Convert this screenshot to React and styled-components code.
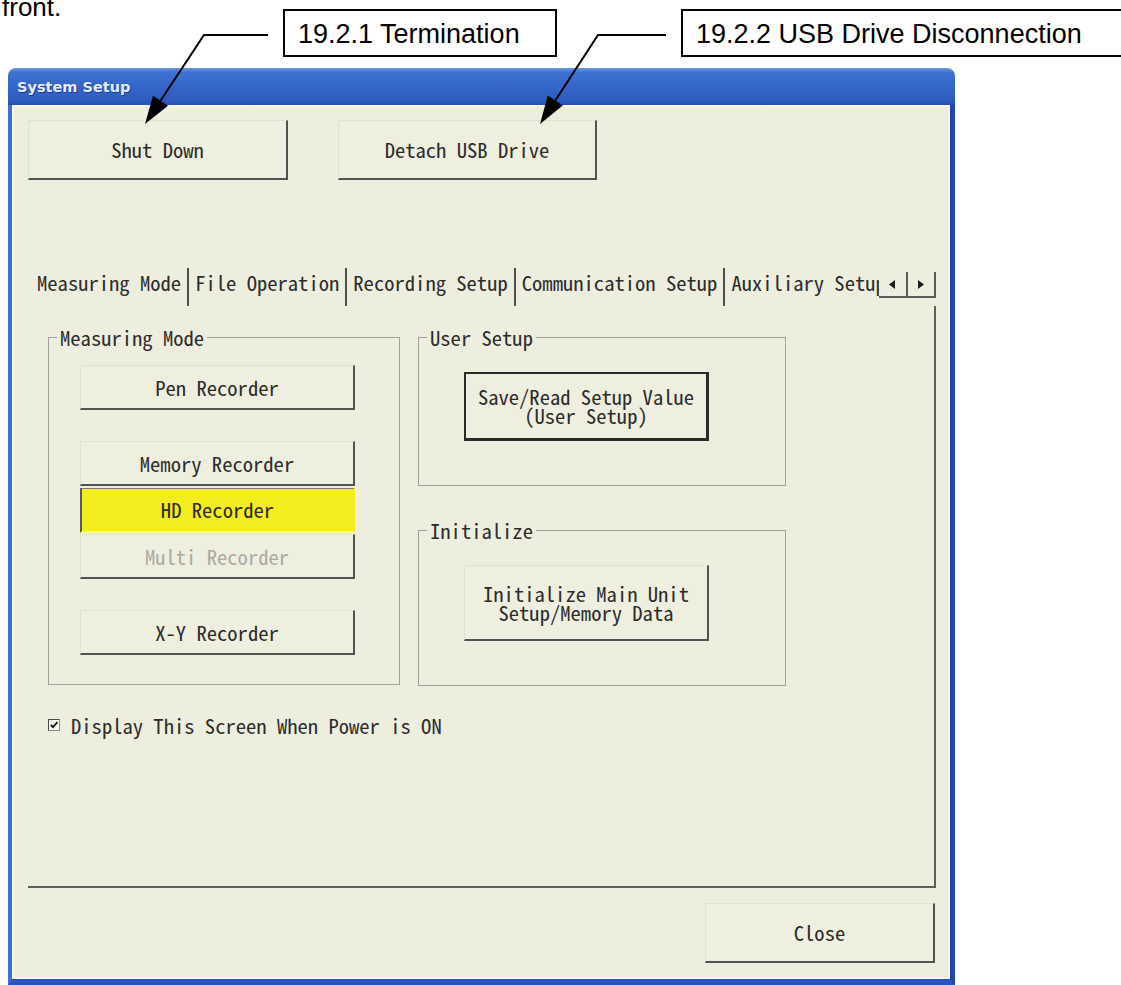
import React from "react";
import styled, { createGlobalStyle } from "styled-components";

const UI_FONT = `"Noto Sans Mono CJK JP", "Noto Sans Mono CJK SC", "DejaVu Sans Mono", monospace`;
const CREAM = "#eeeede";
const DARK = "#525250";
const INK = "#2c2c2c";

const GlobalStyle = createGlobalStyle`
  html, body { margin: 0; padding: 0; background: #ffffff; }
  #root { width: 1121px; height: 985px; }
  * { box-sizing: border-box; }
`;

const Page = styled.div`
  position: relative;
  width: 1121px;
  height: 985px;
  overflow: hidden;
  background: #ffffff;
`;

const DocText = styled.p`
  margin: -6px 0 0 2px;
  height: 74px;
  font-family: "Liberation Sans", Arial, sans-serif;
  font-size: 26px;
  line-height: 26px;
  color: #000;
`;

const Callout = styled.div`
  position: absolute;
  top: 9px;
  left: ${(p) => p.$left}px;
  width: ${(p) => p.$width}px;
  height: 48px;
  border: 2px solid #000;
  background: #fff;
  padding: 3px 0 0 13px;
  display: flex;
  align-items: center;
  font-family: "Liberation Sans", Arial, sans-serif;
  font-size: 27px;
  line-height: 1;
  color: #000;
  white-space: nowrap;
  z-index: 3;
`;

const ArrowLayer = styled.svg`
  position: absolute;
  left: 0;
  top: 0;
  width: 1121px;
  height: 200px;
  pointer-events: none;
  z-index: 4;
`;

const Window = styled.div`
  margin-left: 8px;
  width: 947px;
  display: flex;
  flex-direction: column;
`;

const TitleBar = styled.div`
  height: 37px;
  border-radius: 8px 8px 0 0;
  background: linear-gradient(
    180deg,
    #6b95e0 0%,
    #3f71d2 12%,
    #3466c8 50%,
    #2e5dc0 85%,
    #2550b2 100%
  );
  padding: 12px 0 0 9px;
  font-family: "DejaVu Sans", "Liberation Sans", sans-serif;
  font-weight: bold;
  font-size: 14.5px;
  line-height: 1;
  color: #e4ecfb;
  text-shadow: 1px 1px 0 #1c3c92;
`;

const Frame = styled.div`
  height: 880px;
  border-left: 4px solid #3e70d4;
  border-right: 5px solid #2444ac;
  border-bottom: 6px solid #2a52c0;
  background: ${CREAM};
  box-shadow: inset 2px 2px 0 #f8f8ee, inset -2px -2px 0 #f6f6ea;
  padding: 15px 14px 0 16px;
  display: flex;
  flex-direction: column;
`;

const ButtonRow = styled.div`
  display: flex;
  gap: 50px;
`;

const Button = styled.div`
  width: ${(p) => p.$w}px;
  height: ${(p) => p.$h}px;
  flex-shrink: 0;
  display: flex;
  align-items: center;
  justify-content: center;
  text-align: center;
  white-space: pre-line;
  font-family: ${UI_FONT};
  font-size: 20.6px;
  line-height: 19px;
  color: ${(p) => (p.$variant === "disabled" ? "#aaaaa2" : INK)};
  background: ${(p) => (p.$variant === "selected" ? "#f3ed1f" : "#efefe0")};
  border-style: solid;
  ${(p) =>
    p.$variant === "selected"
      ? `
    border-width: 1px 2px 2px 2px;
    border-color: #7a7a70 transparent #f6f3a0 #5a5a55;
  `
      : p.$variant === "focused"
      ? `
    border-width: 2px 3px 3px 2px;
    border-color: #2a2a28;
  `
      : `
    border-width: 1px 2px 2px 1px;
    border-color: #e2e2d4 ${DARK} ${DARK} #e2e2d4;
  `}
`;

const TabStrip = styled.div`
  margin-top: 88px;
  margin-left: 3px;
  height: 38px;
  display: flex;
`;

const TabList = styled.div`
  flex: 1;
  display: flex;
  overflow: hidden;
`;

const Tab = styled.div`
  flex-shrink: 0;
  height: 38px;
  padding: 3px 6px 0 6px;
  white-space: nowrap;
  font-family: ${UI_FONT};
  font-size: 20.6px;
  line-height: 22px;
  color: ${INK};
  border-left: ${(p) => (p.$first ? "none" : `2px solid #4e4e4c`)};
`;

const ScrollBox = styled.div`
  width: 57px;
  height: 26px;
  margin-top: 4px;
  display: flex;
  border-right: 2px solid #5a5a56;
  border-bottom: 2px solid #5a5a56;
`;

const ScrollCell = styled.div`
  flex: 1;
  display: flex;
  align-items: center;
  justify-content: center;
  border-left: ${(p) => (p.$sep ? "2px solid #5a5a56" : "none")};
`;

const Panel = styled.div`
  width: 908px;
  height: 582px;
  border-right: 2px solid #5e5e5a;
  border-bottom: 2px solid #5e5e5a;
  padding: 20px 0 0 20px;
  display: flex;
  flex-direction: column;
`;

const PanelColumns = styled.div`
  display: flex;
  gap: 18px;
  align-items: flex-start;
`;

const RightColumn = styled.div`
  display: flex;
  flex-direction: column;
  gap: 33px;
`;

const Group = styled.fieldset`
  width: ${(p) => p.$w}px;
  margin: 0;
  padding: 0;
  border: 1px solid #a09f98;
  min-inline-size: 0;
`;

const GroupTitle = styled.legend`
  margin-left: 8px;
  padding: 0 3px;
  font-family: ${UI_FONT};
  font-size: 20.6px;
  line-height: 22px;
  color: ${INK};
`;

const GroupBody = styled.div`
  padding: ${(p) => p.$pad};
  display: flex;
  flex-direction: column;
  gap: ${(p) => p.$gap || 0}px;
`;

const Cluster = styled.div`
  display: flex;
  flex-direction: column;
  gap: 1.5px;
`;

const CheckRow = styled.div`
  margin-top: 28px;
  display: flex;
  align-items: center;
  gap: 11px;
  font-family: ${UI_FONT};
  font-size: 20.6px;
  line-height: 22px;
  color: ${INK};
`;

const CheckBox = styled.span`
  width: 12px;
  height: 12px;
  display: inline-flex;
  border: 1px solid #4a4a48;
  border-right-color: #8a8a84;
  border-bottom-color: #8a8a84;
  background: #f6f6ee;
`;

const Footer = styled.div`
  margin-top: 15px;
  display: flex;
  justify-content: flex-end;
  padding-right: 1px;
`;

const TriLeft = () => (
  <svg width="6" height="9" viewBox="0 0 6 9">
    <polygon points="6,0 6,9 0,4.5" fill="#1c1c1c" />
  </svg>
);
const TriRight = () => (
  <svg width="6" height="9" viewBox="0 0 6 9">
    <polygon points="0,0 0,9 6,4.5" fill="#1c1c1c" />
  </svg>
);

export default function App() {
  return (
    <Page>
      <GlobalStyle />
      <DocText>front.</DocText>

      <Callout $left={283} $width={274}>19.2.1 Termination</Callout>
      <Callout $left={681} $width={450}>19.2.2 USB Drive Disconnection</Callout>

      <ArrowLayer viewBox="0 0 1121 200">
        <polyline
          points="268,35 204,35 160.5,100.7"
          fill="none"
          stroke="#000"
          strokeWidth="2"
        />
        <polygon points="145,124 168,105.7 153,95.7" fill="#000" />
        <polyline
          points="666,35 598,35 555.3,100.5"
          fill="none"
          stroke="#000"
          strokeWidth="2"
        />
        <polygon points="540,124 562.8,105.4 547.8,95.6" fill="#000" />
      </ArrowLayer>

      <Window>
        <TitleBar>System Setup</TitleBar>
        <Frame>
          <ButtonRow>
            <Button $w={260} $h={60}>Shut Down</Button>
            <Button $w={259} $h={60}>Detach USB Drive</Button>
          </ButtonRow>

          <TabStrip>
            <TabList>
              <Tab $first>Measuring Mode</Tab>
              <Tab>File Operation</Tab>
              <Tab>Recording Setup</Tab>
              <Tab>Communication Setup</Tab>
              <Tab>Auxiliary Setup</Tab>
            </TabList>
            <ScrollBox>
              <ScrollCell>
                <TriLeft />
              </ScrollCell>
              <ScrollCell $sep>
                <TriRight />
              </ScrollCell>
            </ScrollBox>
          </TabStrip>

          <Panel>
            <PanelColumns>
              <Group $w={352}>
                <GroupTitle>Measuring Mode</GroupTitle>
                <GroupBody $pad="17px 0 29px 31px" $gap={31}>
                  <Button $w={275} $h={45}>Pen Recorder</Button>
                  <Cluster>
                    <Button $w={275} $h={45}>Memory Recorder</Button>
                    <Button $w={275} $h={45} $variant="selected">HD Recorder</Button>
                    <Button $w={275} $h={45} $variant="disabled">Multi Recorder</Button>
                  </Cluster>
                  <Button $w={275} $h={45}>X-Y Recorder</Button>
                </GroupBody>
              </Group>

              <RightColumn>
                <Group $w={368}>
                  <GroupTitle>User Setup</GroupTitle>
                  <GroupBody $pad="24px 0 44px 45px">
                    <Button $w={245} $h={69} $variant="focused">
                      {"Save/Read Setup Value\n(User Setup)"}
                    </Button>
                  </GroupBody>
                </Group>
                <Group $w={368}>
                  <GroupTitle>Initialize</GroupTitle>
                  <GroupBody $pad="24px 0 44px 45px">
                    <Button $w={245} $h={76}>
                      {"Initialize Main Unit\nSetup/Memory Data"}
                    </Button>
                  </GroupBody>
                </Group>
              </RightColumn>
            </PanelColumns>

            <CheckRow>
              <CheckBox>
                <svg width="10" height="10" viewBox="0 0 10 10">
                  <path
                    d="M1.8 4.8 L4 7.2 L8.4 2.2"
                    fill="none"
                    stroke="#111"
                    strokeWidth="1.8"
                  />
                </svg>
              </CheckBox>
              Display This Screen When Power is ON
            </CheckRow>
          </Panel>

          <Footer>
            <Button $w={230} $h={60}>Close</Button>
          </Footer>
        </Frame>
      </Window>
    </Page>
  );
}
